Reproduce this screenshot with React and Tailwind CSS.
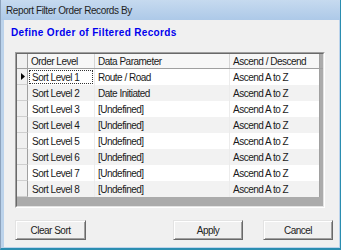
const rows = [
  ["Sort Level 1", "Route / Road", "Ascend A to Z"],
  ["Sort Level 2", "Date Initiated", "Ascend A to Z"],
  ["Sort Level 3", "[Undefined]", "Ascend A to Z"],
  ["Sort Level 4", "[Undefined]", "Ascend A to Z"],
  ["Sort Level 5", "[Undefined]", "Ascend A to Z"],
  ["Sort Level 6", "[Undefined]", "Ascend A to Z"],
  ["Sort Level 7", "[Undefined]", "Ascend A to Z"],
  ["Sort Level 8", "[Undefined]", "Ascend A to Z"],
];

function Button({ children, className = "" }) {
  return (
    <div
      className={
        "h-[20px] flex items-center justify-center bg-[#f0f0f0] border border-t-[#e3e3e3] border-l-[#e3e3e3] border-b-[#696969] border-r-[#696969] shadow-[inset_1px_1px_0_#ffffff,inset_-1px_-1px_0_#a0a0a0] text-[#222] " +
        className
      }
    >
      {children}
    </div>
  );
}

export default function App() {
  return (
    <div className="w-[341px] h-[250px] flex flex-col bg-[#bcd3eb] border-l border-l-[#8da3bd] border-r border-r-[#2a8db0] border-b-2 border-b-[#2a8db0] font-['Liberation_Sans',Arial,sans-serif] text-[10px] tracking-[-0.5px] text-[#1a1a1a] overflow-hidden">
      <div className="h-[20px] shrink-0 flex items-center pl-[5px] bg-gradient-to-b from-[#c6daef] to-[#adc9e8] text-[10px] tracking-[-0.4px] text-[#1e1e1e]">
        Report Filter Order Records By
      </div>
      <div className="flex-1 ml-[3px] mr-[1px] mb-[1px] bg-[#f0f0f0] flex flex-col pl-[7px]">
        <div className="pt-[7px] h-[19px] leading-[12px] font-bold text-[10px] tracking-[0.35px] text-[#0000ee]">
          Define Order of Filtered Records
        </div>
        <div className="mt-[13px] ml-[4px] w-[310px] h-[156px] border border-t-[#a0a0a0] border-l-[#a0a0a0] border-b-white border-r-white">
          <div className="w-full h-full border border-t-[#696969] border-l-[#696969] border-b-[#e3e3e3] border-r-[#e3e3e3] bg-[#ababab] flex flex-col">
            <div className="flex h-[15px] shrink-0 border-b border-b-[#a0a0a0]">
              <div className="w-[11px] shrink-0 bg-[#f0f0f0] border-r border-r-[#a0a0a0]" />
              <div className="w-[67px] shrink-0 bg-[#f7f7f7] border-r border-r-[#d6d6d6] pl-[3px] flex items-center">Order Level</div>
              <div className="w-[135px] shrink-0 bg-[#f7f7f7] border-r border-r-[#d6d6d6] pl-[3px] flex items-center">Data Parameter</div>
              <div className="w-[90px] shrink-0 bg-[#f7f7f7] border-r border-r-[#a0a0a0] pl-[3px] flex items-center">Ascend / Descend</div>
            </div>
            {rows.map((r, i) => (
              <div key={i} className="flex h-[16px] shrink-0">
                <div className="w-[11px] shrink-0 bg-[#f0f0f0] border-r border-r-[#a0a0a0] border-b border-b-[#cfcfcf] flex items-center justify-center">
                  {i === 0 && (
                    <svg width="4" height="7" viewBox="0 0 4 7" className="ml-[1px]">
                      <path d="M0 0 L4 3.5 L0 7 Z" fill="#000" />
                    </svg>
                  )}
                </div>
                <div className={"flex shrink-0 " + (i % 2 === 0 ? "bg-white" : "bg-[#f2f2f2]")}>
                  <div className="w-[67px] shrink-0 border-r border-r-[#ececec] p-[1px]">
                    <div className={"h-full pl-[2px] flex items-center border border-dotted " + (i === 0 ? "border-[#333]" : "border-transparent")}>
                      {r[0]}
                    </div>
                  </div>
                  <div className="w-[135px] shrink-0 border-r border-r-[#ececec] pl-[3px] flex items-center">{r[1]}</div>
                  <div className="w-[90px] shrink-0 border-r border-r-[#a0a0a0] pl-[3px] flex items-center">{r[2]}</div>
                </div>
              </div>
            ))}
          </div>
        </div>
        <div className="mt-[12px] flex pl-[4px] pr-[6px]">
          <Button className="w-[71px]">Clear Sort</Button>
          <Button className="w-[70px] ml-auto">Apply</Button>
          <Button className="w-[70px] ml-[20px]">Cancel</Button>
        </div>
      </div>
    </div>
  );
}
